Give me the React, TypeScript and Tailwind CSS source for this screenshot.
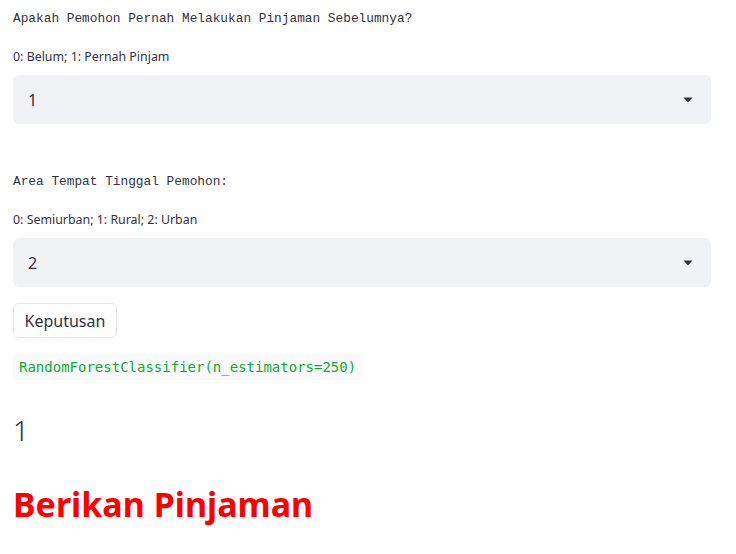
function Caret() {
  return (
    <svg width="10" height="6" viewBox="0 0 10 6" className="text-[#31333f]">
      <path d="M0.5 0.5 L9.5 0.5 L5 5.5 Z" fill="currentColor" />
    </svg>
  );
}

function SelectBox({ label, help, value }: { label: string; help: string; value: string }) {
  return (
    <div className="flex flex-col">
      <p className="font-['Liberation_Mono',monospace] text-[12.8px] leading-[20px] text-[#31333f]">{label}</p>
      <p className="mt-[20px] text-[12.4px] leading-[16px] text-[#31333f]">{help}</p>
      <div className="mt-[10px] flex h-[49px] items-center justify-between rounded-[6px] bg-[#f0f2f6] pl-[15px] pr-[18px]">
        <span className="text-[16px] text-[#31333f]">{value}</span>
        <Caret />
      </div>
    </div>
  );
}

export default function App() {
  return (
    <div className="min-h-[554px] w-[736px] bg-white px-[13px] pt-[9px] font-['Noto_Sans',sans-serif] text-[#31333f]">
      <div className="w-[698px]">
        <SelectBox
          label="Apakah Pemohon Pernah Melakukan Pinjaman Sebelumnya?"
          help="0: Belum; 1: Pernah Pinjam"
          value="1"
        />
        <div className="mt-[48px]">
          <SelectBox
            label="Area Tempat Tinggal Pemohon:"
            help="0: Semiurban; 1: Rural; 2: Urban"
            value="2"
          />
        </div>
      </div>
      <button className="mt-[16px] h-[35px] rounded-[6px] border border-[#e6e8ee] bg-white px-[10.5px] text-[16px] text-[#31333f]">
        Keputusan
      </button>
      <div className="mt-[16px]">
        <code className="inline-block rounded-[4px] bg-[#fafafa] px-[6px] py-[3px] font-['DejaVu_Sans_Mono',monospace] text-[14px] leading-[20px] text-[#09ab3b]">
          RandomForestClassifier(n_estimators=250)
        </code>
      </div>
      <p className="mt-[32px] text-[28px] font-light leading-[36px] text-[#31333f]">1</p>
      <h1 className="mt-[34px] text-[34px] font-bold leading-[44px] text-[#ff0000]">Berikan Pinjaman</h1>
    </div>
  );
}
